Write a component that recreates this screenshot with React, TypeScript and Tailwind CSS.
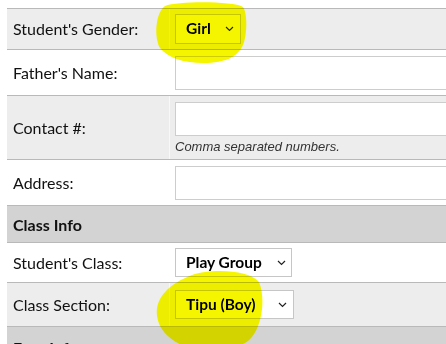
const label = "font-['Lato','Liberation_Sans',sans-serif] text-[16px] text-[#111]";

function Chevron() {
  return (
    <svg width={9} height={6} viewBox="0 0 9 6" fill="none" stroke="#222" strokeWidth={1.2}>
      <path d="M1 1l3.5 3.5L8 1" />
    </svg>
  );
}

function Select({ value, width, pr }: { value: string; width: string; pr: string }) {
  return (
    <div
      className={`flex items-center justify-between border border-[#c6c6c6] bg-white pl-[10px] ${width} ${pr}`}
    >
      <span className="font-['Lato','Liberation_Sans',sans-serif] text-[15.5px] font-bold text-black">{value}</span>
      <Chevron />
    </div>
  );
}

function Input() {
  return <div className="h-[34px] w-[300px] border border-[#cdcdcd] bg-white" />;
}

export default function App() {
  return (
    <div className="relative h-[344px] w-[446px] overflow-hidden bg-white">
      <div className="ml-[7px] mt-[8px] w-[460px] border-t border-[#b9b9b9]">
        <div className="grid h-[41px] grid-cols-[163px_1fr] border-b border-[#b9b9b9] bg-[#ededed]">
          <div className={`flex items-center border-r border-[#f8f8f8] pl-[6px] ${label}`}>Student's Gender:</div>
          <div className="flex items-center pl-[5px]">
            <Select value="Girl" width="h-[30px] w-[66px]" pr="pr-[6px]" />
          </div>
        </div>
        <div className="grid h-[46px] grid-cols-[163px_1fr] border-b border-[#b9b9b9] bg-white">
          <div className={`flex items-center pl-[6px] ${label}`}>Father's Name:</div>
          <div className="flex items-center pl-[5px]">
            <Input />
          </div>
        </div>
        <div className="grid h-[64px] grid-cols-[163px_1fr] border-b border-[#b9b9b9] bg-[#ededed]">
          <div className={`flex items-center border-r border-[#f8f8f8] pl-[6px] ${label}`}>Contact #:</div>
          <div className="flex flex-col pl-[5px] pt-[6px]">
            <Input />
            <span className="mt-[1px] font-['Liberation_Sans',Arial,sans-serif] text-[13px] italic text-[#333]">
              Comma separated numbers.
            </span>
          </div>
        </div>
        <div className="grid h-[46px] grid-cols-[163px_1fr] border-b border-[#b9b9b9] bg-white">
          <div className={`flex items-center pl-[6px] ${label}`}>Address:</div>
          <div className="flex items-center pl-[5px]">
            <Input />
          </div>
        </div>
        <div className={`flex h-[37px] items-center border-b border-[#b9b9b9] bg-[#d3d3d3] pl-[6px] pt-[1px] font-bold ${label}`}>
          Class Info
        </div>
        <div className="grid h-[40px] grid-cols-[163px_1fr] border-b border-[#b9b9b9] bg-white">
          <div className={`flex items-center pl-[6px] ${label}`}>Student's Class:</div>
          <div className="flex items-center pl-[5px]">
            <Select value="Play Group" width="h-[29px] w-[117px]" pr="pr-[5px]" />
          </div>
        </div>
        <div className="grid h-[44px] grid-cols-[163px_1fr] border-b border-[#b9b9b9] bg-[#ededed]">
          <div className={`flex items-center border-r border-[#f8f8f8] pl-[6px] ${label}`}>Class Section:</div>
          <div className="flex items-center pl-[5px]">
            <Select value="Tipu (Boy)" width="h-[29px] w-[119px]" pr="pr-[6px]" />
          </div>
        </div>
        <div className={`h-[40px] bg-[#d3d3d3] pl-[6px] pt-[9px] font-bold ${label}`}>Fees Info</div>
      </div>

      <svg className="pointer-events-none absolute left-0 top-0 mix-blend-darken" width={446} height={344}>
        <path
          d="M165 6 C178 1 233 1 243 7 C248 14 247 38 242 47 C237 56 227 63 203 63 C184 63 168 58 160 48 C154 38 155 13 165 6 Z"
          fill="#f5f500"
        />
        <path
          d="M192 275 C212 268 250 270 259 282 C265 296 263 320 254 334 C248 344 240 347 220 347 L186 347 C171 341 159 331 157 316 C155 300 166 285 192 275 Z"
          fill="#f5f500"
        />
      </svg>
    </div>
  );
}
